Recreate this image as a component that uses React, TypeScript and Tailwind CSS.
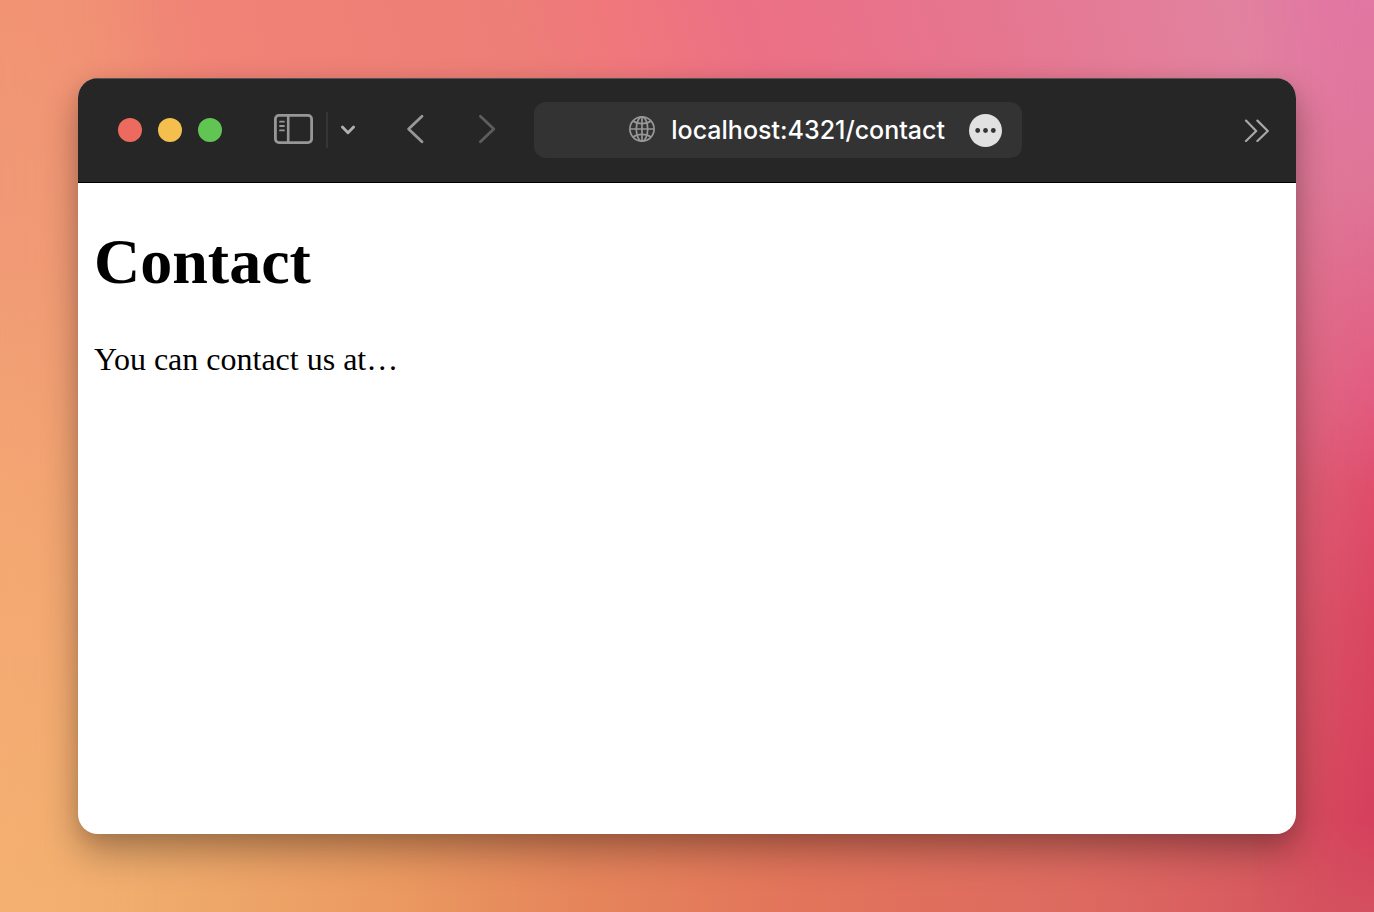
import React, { useState } from 'react'

const SidebarIcon = () => (
  <svg width="39" height="32" viewBox="0 0 39 32" fill="none" stroke="#979797" aria-hidden="true">
    <rect x="1.4" y="1.4" width="36.2" height="27.2" rx="3.5" strokeWidth="2.8" />
    <path d="M14.2 1.5V28.5" strokeWidth="2.6" />
    <path d="M6 7.7H10M6 12H10M6 16.4H10" strokeWidth="1.8" strokeLinecap="round" />
  </svg>
)

const GlobeIcon = () => (
  <svg
    width="26"
    height="28"
    viewBox="0 0 26 28"
    fill="none"
    stroke="#979797"
    strokeWidth="1.7"
    className="shrink-0"
    aria-hidden="true"
  >
    <circle cx="13" cy="13" r="12.1" />
    <ellipse cx="13" cy="13" rx="5.7" ry="12.1" />
    <path d="M13 1V25M1 13H25" />
    <path d="M4.2 5C6.5 6.8 9.5 7.6 13 7.6S19.5 6.8 21.8 5M4.2 21C6.5 19.2 9.5 18.4 13 18.4S19.5 19.2 21.8 21" />
  </svg>
)

const Backdrop = () => (
  <div
    className="absolute inset-0 -z-10 bg-[linear-gradient(to_right,#f3b070_0%,#efac6d_10%,#eb9a61_28%,#e5855b_42%,#e2745b_58%,#dd6a60_78%,#d4515f_100%)]"
    aria-hidden="true"
  >
    <div className="absolute inset-0 bg-[linear-gradient(75deg,#f19474_16%,#f08276_28%,#ed7e77_46%,#f0777c_53%,#ec7085_61%,#e6758f_75%,#e2829f_91%,#e278a3_100%)] [mask-image:linear-gradient(to_bottom,black_8%,transparent_90%)]" />
    <div className="absolute inset-0 bg-[linear-gradient(to_bottom,#f19474_0%,#f09a76_28%,#f3a672_55%,#f4ac72_78%,#f3b070_100%)] [mask-image:linear-gradient(to_right,black,transparent_12%)]" />
    <div className="absolute inset-0 bg-[linear-gradient(to_bottom,#e276a2_0%,#de7698_20%,#e25c81_43%,#df4d6b_54%,#da4660_68%,#d5405c_90%,#d4505f_100%)] [mask-image:linear-gradient(to_left,black,transparent_9%)]" />
  </div>
)

const Toolbar = () => {
  const [url, setUrl] = useState('localhost:4321/contact')

  return (
    <header className="flex h-[105px] shrink-0 items-center border-b border-black bg-[#262626] pl-10 pr-[26px] shadow-[inset_0_1px_0_#545454]">
      <div className="flex shrink-0 gap-4">
        <button aria-label="Close" className="size-6 rounded-full bg-[#ed6a5e]" />
        <button aria-label="Minimize" className="size-6 rounded-full bg-[#f5bf4f]" />
        <button aria-label="Zoom" className="size-6 rounded-full bg-[#61c554]" />
      </div>

      <div className="ml-13 flex shrink-0 items-center">
        <button aria-label="Show sidebar">
          <SidebarIcon />
        </button>
        <div className="ml-[13px] h-9 w-0.5 bg-[#363636]" />
        <button aria-label="Tab groups" className="ml-3">
          <svg width="16" height="12" viewBox="0 0 16 12" fill="none" stroke="#b0b0b0" strokeWidth="2.8" strokeLinecap="round" strokeLinejoin="round" aria-hidden="true">
            <path d="M2.4 3L8 8.8L13.6 3" />
          </svg>
        </button>
      </div>

      <nav className="ml-12 flex shrink-0 gap-12">
        <button aria-label="Back">
          <svg width="24" height="32" viewBox="0 0 24 32" fill="none" stroke="#979797" strokeWidth="2.8" strokeLinecap="round" strokeLinejoin="round" aria-hidden="true">
            <path d="M18 2.2L4.6 15L18 27.8" />
          </svg>
        </button>
        <button aria-label="Forward">
          <svg width="24" height="32" viewBox="0 0 24 32" fill="none" stroke="#5d5d5d" strokeWidth="2.8" strokeLinecap="round" strokeLinejoin="round" aria-hidden="true">
            <path d="M4.4 2.2L17.8 15L4.4 27.8" />
          </svg>
        </button>
      </nav>

      <form
        onSubmit={(e) => e.preventDefault()}
        className="ml-[34px] flex h-14 w-full max-w-122 items-center justify-end gap-4 rounded-xl bg-[#333333] pr-5"
      >
        <GlobeIcon />
        <input
          aria-label="Address"
          value={url}
          onChange={(e) => setUrl(e.target.value)}
          spellCheck={false}
          className="min-w-0 field-sizing-content bg-transparent font-['Inter',sans-serif] text-[25px] leading-8 font-medium text-white outline-none"
        />
        <button type="button" aria-label="Page menu" className="ml-2 shrink-0">
          <svg width="33" height="33" viewBox="0 0 33 33" aria-hidden="true">
            <circle cx="16.5" cy="16.5" r="16.5" fill="#e1e1e1" />
            <g fill="#333333">
              <circle cx="8.7" cy="16.5" r="2.4" />
              <circle cx="16.5" cy="16.5" r="2.4" />
              <circle cx="24.3" cy="16.5" r="2.4" />
            </g>
          </svg>
        </button>
      </form>

      <button aria-label="More toolbar items" className="ml-auto shrink-0">
        <svg width="26" height="24" viewBox="0 0 26 24" fill="none" stroke="#a8a8a8" strokeWidth="2.2" strokeLinecap="round" strokeLinejoin="round" aria-hidden="true">
          <path d="M2 2.6L12.2 13L2 23M13.4 2.6L23.8 13L13.4 23" />
        </svg>
      </button>
    </header>
  )
}

const App = () => {
  return (
    <div className="relative isolate flex min-h-screen flex-col p-[78px]">
      <Backdrop />
      <div className="flex grow flex-col overflow-hidden rounded-[20px] bg-white shadow-[0_18px_36px_rgba(0,0,0,0.3),0_4px_16px_rgba(0,0,0,0.08)]">
        <Toolbar />
        <main className="px-4 pt-[42px] font-['Liberation_Serif',serif] text-black">
          <h1 className="mb-[42px] text-[64px] leading-[74px] font-bold">Contact</h1>
          <p className="text-[32px] leading-9">You can contact us at…</p>
        </main>
      </div>
    </div>
  )
}

export default App
